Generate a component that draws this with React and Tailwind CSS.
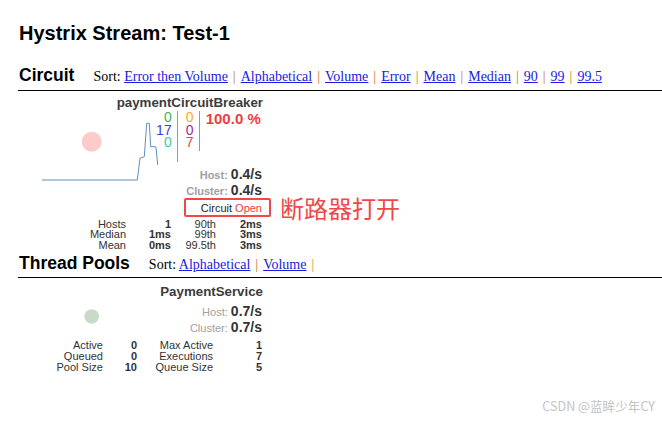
const circuitSorts = ['Error then Volume', 'Alphabetical', 'Volume', 'Error', 'Mean', 'Median', '90', '99', '99.5'];
const poolSorts = ['Alphabetical', 'Volume'];

function SortBar({ links, trailing }) {
  return (
    <div className="ml-[19px] font-['Liberation_Serif','Times_New_Roman',serif] text-[14px] text-black">
      Sort:{' '}
      {links.map((l, i) => (
        <span key={l}>
          {i > 0 && <span className="mx-[5px] text-[#c8752f]">|</span>}
          <a href="#" className="text-[#1a1ae0] underline">{l}</a>
        </span>
      ))}
      {trailing && <span className="ml-[5px] text-[#e0902f]">|</span>}
    </div>
  );
}

function Rate({ label, value, bold }) {
  return (
    <div>
      <span className={`text-[11px] leading-none text-[#a0a0a0] ${bold ? 'font-bold' : ''}`}>{label} </span>
      <span className="text-[14px] font-bold text-[#333]">{value}</span>
    </div>
  );
}

export default function App() {
  return (
    <div className="relative w-[662px] h-[421px] overflow-hidden bg-white pl-[18px] font-['Liberation_Sans',Arial,sans-serif] text-black">
      <h1 className="pt-[23px] pl-[1px] text-[20px] leading-[20px] font-bold">Hystrix Stream: Test-1</h1>

      {/* Circuit header */}
      <div className="mt-[23px] h-[25px] flex items-baseline border-b border-black">
        <h2 className="pl-[1px] text-[17.5px] leading-[18px] font-bold">Circuit</h2>
        <SortBar links={circuitSorts} />
      </div>

      {/* Circuit card */}
      <div className="relative w-[245px] pt-[5px]">
        <svg className="absolute left-0 top-0" width="245" height="100">
          <circle cx="73.7" cy="50.7" r="10" fill="#ffcaca" />
          <path
            d="M24 89 L119.3 89 L122 67.3 L126.3 65.7 L128.7 32.3 L131.3 32.3 L132.7 55.7 L136 55.7 L138 56 L139.7 74"
            fill="none"
            stroke="#5f8fbe"
            strokeWidth="1"
          />
        </svg>
        <div className="relative text-right text-[13.3px] leading-[13px] font-bold text-[#3b3b3b]">paymentCircuitBreaker</div>
        <div className="relative mt-[2px] h-[51px] flex items-start">
          <div className="w-[153.7px] text-right text-[14px] leading-[12.5px]">
            <div className="text-[#4cae4c]">0</div>
            <div className="text-[#3a3af0]">17</div>
            <div className="text-[#3ccc9e]">0</div>
          </div>
          <div className="ml-[5px] w-px h-[51px] bg-[#999]" />
          <div className="ml-[8px] w-[7px] text-[14px] leading-[12.5px]">
            <div className="text-[#ffa726]">0</div>
            <div className="text-[#a02aa8]">0</div>
            <div className="text-[#f23c3c]">7</div>
          </div>
          <div className="ml-[6px] w-px h-[40px] bg-[#999]" />
          <div className="ml-[6px] text-[15px] leading-[15px] font-bold text-[#f23c3c]">100.0 %</div>
        </div>
        <div className="relative mt-[3.5px] pr-[1px] text-right text-[14px] leading-[16px]">
          <Rate label="Host:" value="0.4/s" bold />
          <Rate label="Cluster:" value="0.4/s" bold />
        </div>
        <div className="mt-[4px] pr-[1px] text-right text-[11px] leading-[13px] text-[#222]">
          Circuit <span className="text-[#f23c3c]">Open</span>
        </div>
        <div className="mt-[4px] grid grid-cols-[108px_45px_45px_46px] text-right text-[11px] leading-[10.5px] text-[#333]">
          <div>Hosts</div><div className="font-bold">1</div><div>90th</div><div className="font-bold">2ms</div>
          <div>Median</div><div className="font-bold">1ms</div><div>99th</div><div className="font-bold">3ms</div>
          <div>Mean</div><div className="font-bold">0ms</div><div>99.5th</div><div className="font-bold">3ms</div>
        </div>
      </div>

      {/* Thread pools header */}
      <div className="mt-[4.2px] h-[24px] flex items-baseline border-b border-black">
        <h2 className="pl-[1px] text-[17.5px] leading-[18px] font-bold">Thread Pools</h2>
        <SortBar links={poolSorts} trailing />
      </div>

      {/* Thread pool card */}
      <div className="relative w-[245px] pt-[7px]">
        <svg className="absolute left-0 top-0" width="245" height="60">
          <circle cx="73.7" cy="38.5" r="7.3" fill="#c8dbc8" />
        </svg>
        <div className="relative text-right text-[13.3px] leading-[13px] font-bold text-[#3b3b3b]">PaymentService</div>
        <div className="relative mt-[4.7px] pr-[1px] text-right text-[14px] leading-[16px]">
          <Rate label="Host:" value="0.7/s" />
          <Rate label="Cluster:" value="0.7/s" />
        </div>
        <div className="mt-[5.4px] grid grid-cols-[85px_34px_76px_49px] text-right text-[11px] leading-[11px] text-[#333]">
          <div>Active</div><div className="font-bold">0</div><div>Max Active</div><div className="font-bold">1</div>
          <div>Queued</div><div className="font-bold">0</div><div>Executions</div><div className="font-bold">7</div>
          <div>Pool Size</div><div className="font-bold">10</div><div>Queue Size</div><div className="font-bold">5</div>
        </div>
      </div>

      {/* screenshot annotations */}
      <div className="absolute left-[184px] top-[198px] w-[87px] h-[19px] rounded-[2px] border-2 border-[#f04848]" />
      <div className="absolute left-[280px] top-[196px] text-[24px] leading-[24px] text-[#f04848] font-['Noto_Sans_CJK_SC',sans-serif]">
        断路器打开
      </div>
      <div className="absolute right-[7px] top-[400px] text-[12.6px] leading-[12px] text-[#c4c4c4] font-['Noto_Sans_CJK_SC',sans-serif]">
        CSDN @蓝眸少年CY
      </div>
    </div>
  );
}
